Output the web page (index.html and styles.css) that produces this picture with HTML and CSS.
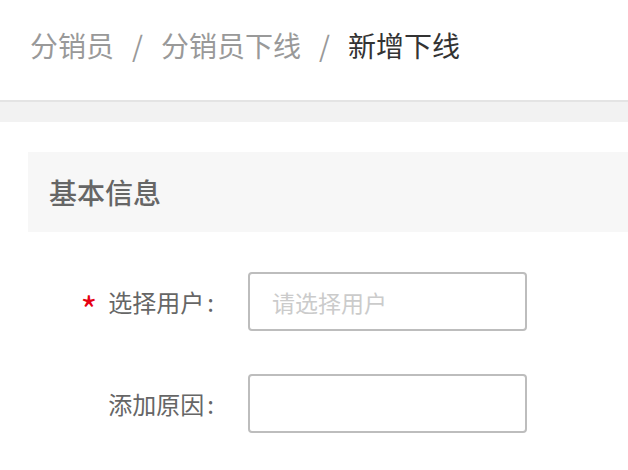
FILE: index.html
```html
<!DOCTYPE html>
<html lang="zh-CN">
<head>
<meta charset="utf-8">
<link rel="stylesheet" href="styles.css">
</head>
<body>
<header class="topbar">
  <nav class="crumbs">
    <span class="crumb">分销员</span>
    <span class="sep">/</span>
    <span class="crumb">分销员下线</span>
    <span class="sep">/</span>
    <span class="crumb current">新增下线</span>
  </nav>
</header>
<div class="band"></div>
<main class="content">
  <div class="section-title">基本信息</div>
  <form class="form">
    <div class="row">
      <label class="label"><span class="req">*</span>选择用户<span class="colon">:</span></label>
      <input class="input" type="text" placeholder="请选择用户">
    </div>
    <div class="row">
      <label class="label">添加原因<span class="colon">:</span></label>
      <input class="input" type="text">
    </div>
  </form>
</main>
</body>
</html>
```
FILE: styles.css
```css
html, body {
  margin: 0;
  padding: 0;
  background: #fff;
  font-family: "Noto Sans CJK SC", "Noto Sans", sans-serif;
}

.topbar {
  height: 102px;
  box-sizing: border-box;
  border-bottom: 2px solid #e4e4e4;
  display: flex;
  align-items: center;
  padding: 0 0 10px 30px;
}

.crumbs {
  display: flex;
  align-items: center;
  font-size: 28px;
  line-height: 1;
  color: #999;
}

.sep {
  padding: 0 18px;
  color: #999;
}

.current {
  color: #333;
}

.band {
  height: 20px;
  background: #f2f2f2;
}

.content {
  padding: 30px 0 0 28px;
}

.section-title {
  height: 80px;
  line-height: 80px;
  background: #f7f7f7;
  padding-left: 21px;
  font-size: 28px;
  font-weight: 500;
  color: #666;
}

.form {
  padding-top: 40px;
  display: flex;
  flex-direction: column;
  gap: 43px;
}

.row {
  display: flex;
  align-items: center;
}

.label {
  width: 220px;
  box-sizing: border-box;
  padding-right: 34px;
  text-align: right;
  font-size: 24px;
  color: #666;
  display: flex;
  justify-content: flex-end;
  align-items: center;
}

.colon {
  margin-left: 3px;
}

.req {
  color: #e60012;
  font-size: 36px;
  line-height: 1;
  margin-right: 11px;
  position: relative;
  top: 6px;
}

.input {
  width: 279px;
  height: 59px;
  box-sizing: border-box;
  border: 2px solid #bdbdbd;
  border-radius: 4px;
  padding: 0 22px;
  font-family: inherit;
  font-size: 23px;
  color: #333;
  outline: none;
  background: #fff;
}

.input::placeholder {
  color: #cbcbcb;
}
```
